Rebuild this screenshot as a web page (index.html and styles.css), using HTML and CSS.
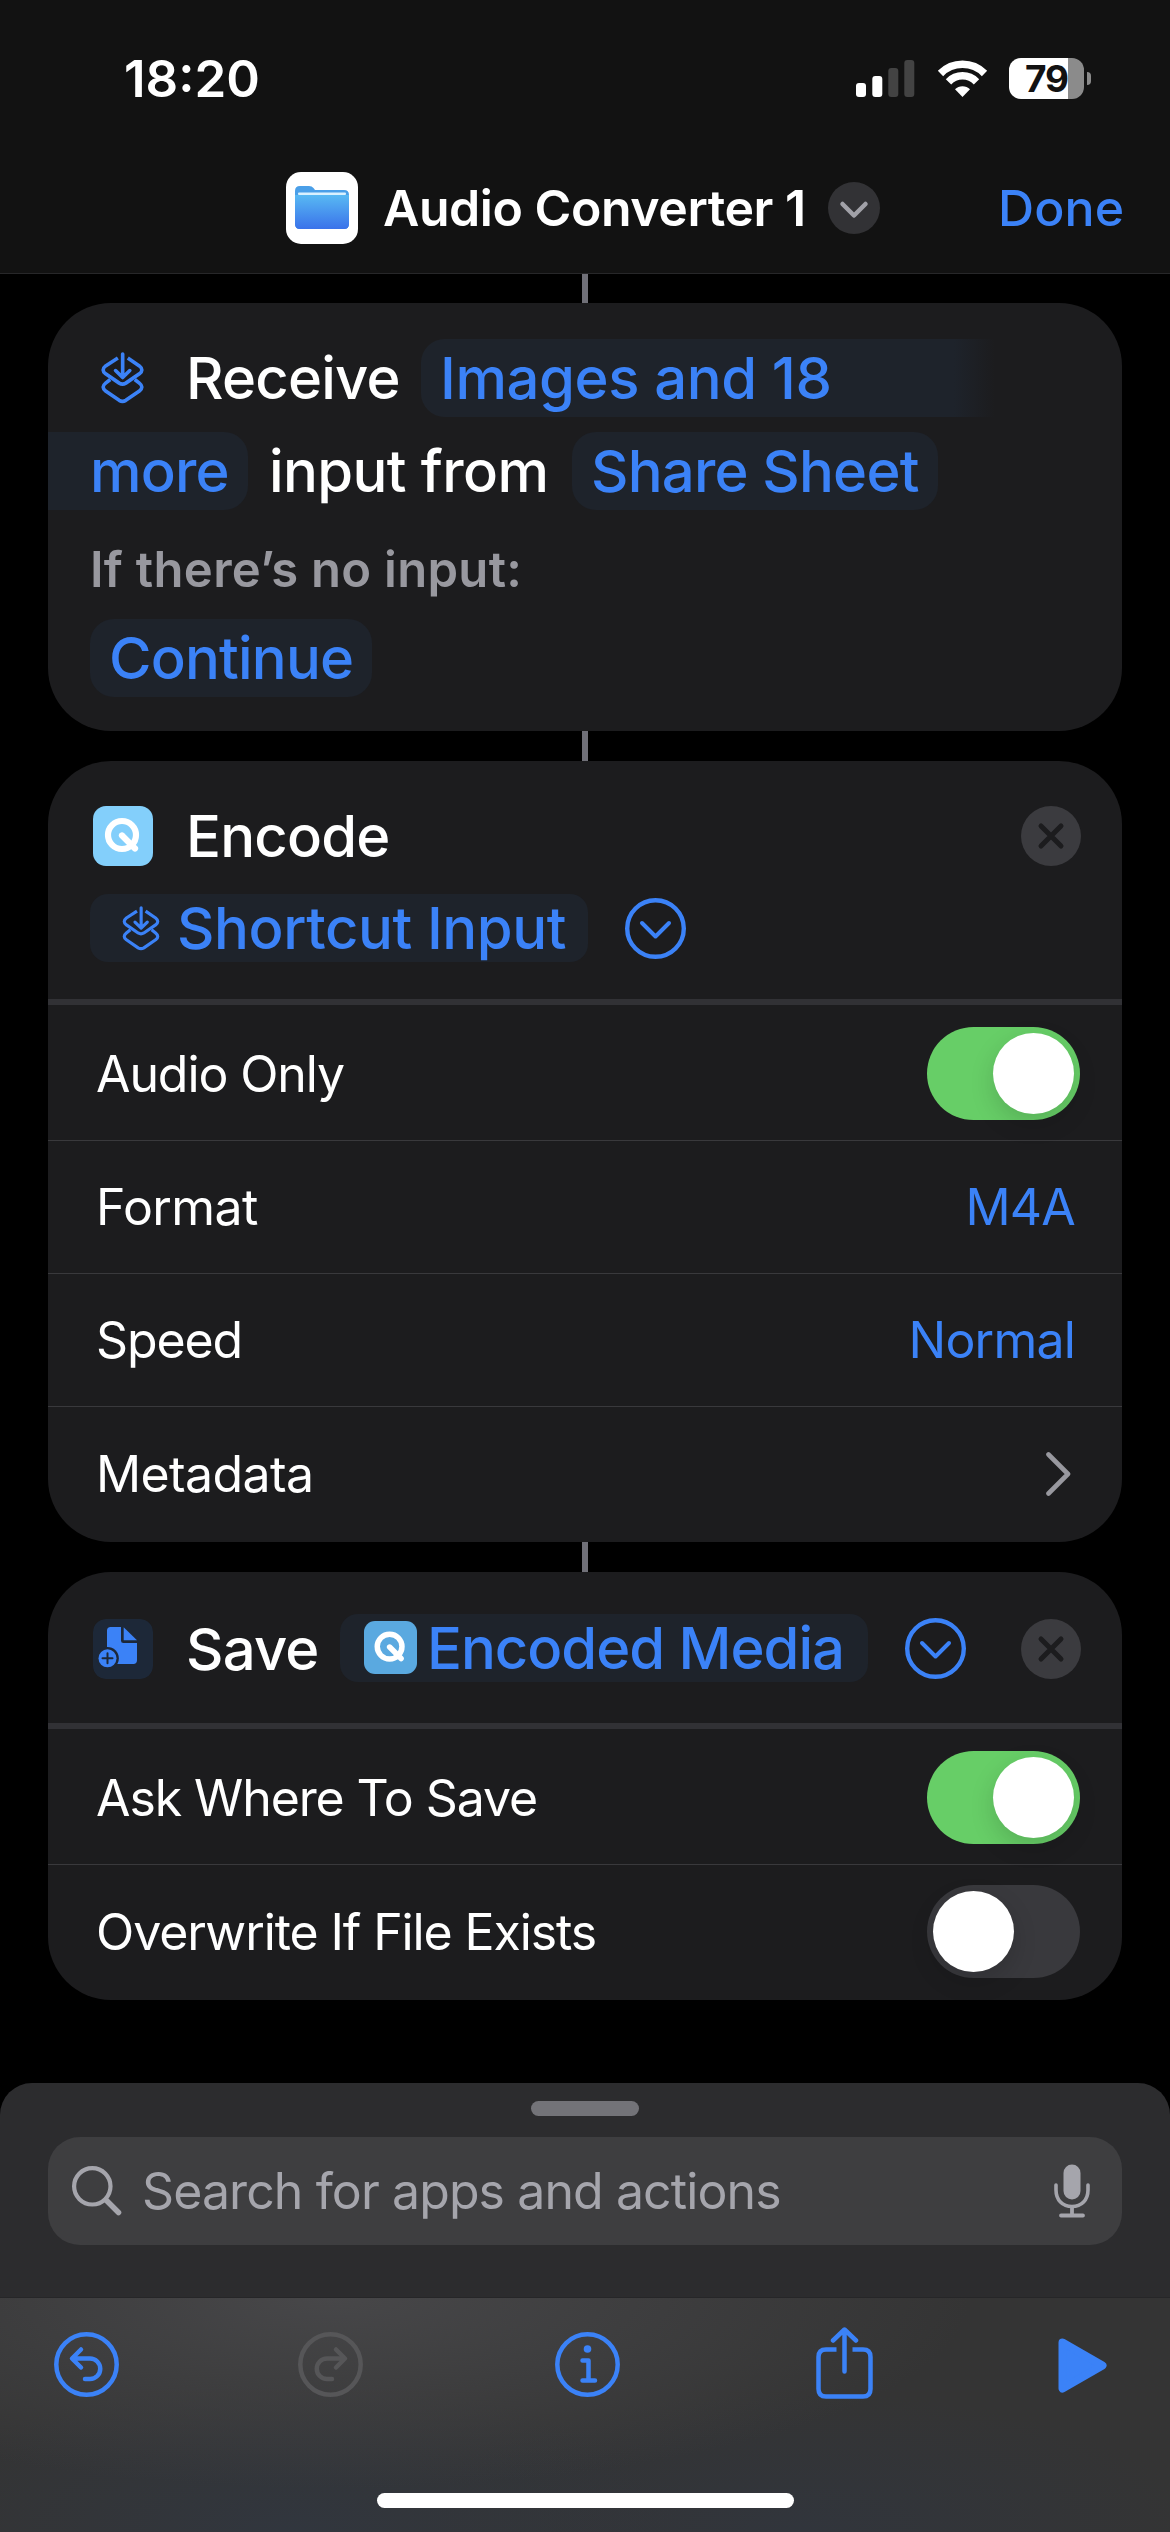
FILE: index.html
```html
<!DOCTYPE html>
<html lang="en">
<head>
<meta charset="utf-8">
<title>Audio Converter 1</title>
<link rel="stylesheet" href="styles.css">
</head>
<body>
<svg class="defs" aria-hidden="true">
  <symbol id="shortcut" viewBox="63 51 130 157">
    <g fill="none" stroke="currentColor" stroke-width="11" stroke-linecap="butt" stroke-linejoin="round">
      <path d="M114 69 L77 93 Q62 105 77 117 L118 145 Q128 151 138 145 L179 117 Q194 105 179 93 L144 69"/>
      <path d="M91 134 L77 145 Q62 157 77 169 L118 197 Q128 203 138 197 L179 169 Q194 157 179 145 L165 134"/>
      <path stroke-linecap="round" d="M128.500 57V126M107 107L128.500 128L150 107"/>
    </g>
  </symbol>
  <symbol id="q" viewBox="0 0 60 60">
    <g fill="none" stroke="#fff" stroke-width="6.200" stroke-linecap="round">
      <circle cx="29" cy="29" r="14"/>
      <path d="M29 29.500L42 42.500"/>
    </g>
  </symbol>
  <symbol id="more" viewBox="0 0 61 61">
    <g fill="none" stroke="currentColor" stroke-linecap="round" stroke-linejoin="round">
      <circle cx="30.500" cy="30.500" r="28.300" stroke-width="4.400"/>
      <path stroke-width="4" d="M17 25L30.500 38.500L44 25"/>
    </g>
  </symbol>
  <symbol id="close" viewBox="0 0 60 60">
    <circle cx="30" cy="30" r="30" fill="#3b3b3f"/>
    <path d="M20 20L40 40M40 20L20 40" fill="none" stroke="#1c1c1e" stroke-width="5" stroke-linecap="round"/>
  </symbol>
</svg>

<header class="header">
  <div class="status">
    <span class="time">18:20</span>
    <span class="status-icons">
      <svg width="59" height="37" viewBox="0 0 59 37">
        <rect x="0" y="23" width="10" height="14" rx="3" fill="#fff"/>
        <rect x="16.300" y="16" width="10" height="21" rx="3" fill="#fff"/>
        <rect x="32.300" y="8" width="10" height="29" rx="3" fill="#434343"/>
        <rect x="48.300" y="0" width="10" height="37" rx="3" fill="#434343"/>
      </svg>
      <svg class="wifi" width="51" height="37" viewBox="0 0 51 37">
        <g fill="none" stroke="#fff" stroke-width="7.500">
          <path d="M3.500 13.500A31 31 0 0 1 47.500 13.500"/>
          <path d="M11.500 21.800A19.500 19.500 0 0 1 39.500 21.800"/>
        </g>
        <path d="M25.500 37L18 29.300A10.600 10.600 0 0 1 33 29.300Z" fill="#fff"/>
      </svg>
      <span class="battery"><span class="level">79</span></span>
      <span class="nub"></span>
    </span>
  </div>
  <div class="titlebar">
    <span class="app-icon">
      <svg width="54" height="43" viewBox="0 0 54 43">
        <defs>
          <linearGradient id="folder" x1="0" y1="0" x2="0" y2="1">
            <stop offset="0" stop-color="#58b9f3"/><stop offset="1" stop-color="#3a72ea"/>
          </linearGradient>
        </defs>
        <path d="M0 5Q0 0 5 0H14Q17 0 18.500 2L20 4H49Q54 4 54 9V38Q54 43 49 43H5Q0 43 0 38Z" fill="#4a9fe8"/>
        <path d="M0 9H54V38Q54 43 49 43H5Q0 43 0 38Z" fill="url(#folder)"/>
        <rect x="3" y="6.500" width="48" height="2.500" rx="1" fill="#d9f1ff"/>
      </svg>
    </span>
    <span class="title">Audio Converter 1</span>
    <svg class="title-more" width="52" height="52" viewBox="0 0 52 52">
      <circle cx="26" cy="26" r="26" fill="#323235"/>
      <path d="M14.500 22L26 33.500L37.500 22" fill="none" stroke="#a1a1a8" stroke-width="4.500" stroke-linecap="round" stroke-linejoin="round"/>
    </svg>
    <span class="done">Done</span>
  </div>
</header>

<main class="flow">
  <div class="link"></div>
  <section class="card receive">
    <div class="line">
      <svg class="receive-icon" width="43" height="52"><use href="#shortcut"/></svg>
      <span class="big receive-word">Receive</span>
      <span class="pill fade"><span class="big loose">Images and 18</span></span>
    </div>
    <div class="line">
      <span class="pill cont"><span class="big">more</span></span>
      <span class="big input-word">input from</span>
      <span class="pill"><span class="big">Share Sheet</span></span>
    </div>
    <div class="hint"><span>If there’s no input:</span></div>
    <div class="line inset"><span class="pill"><span class="big">Continue</span></span></div>
  </section>
  <div class="link"></div>

  <section class="card encode">
    <div class="head">
      <svg class="action-icon q-icon" width="60" height="60"><use href="#q"/></svg>
      <span class="big">Encode</span>
      <svg class="close" width="60" height="60"><use href="#close"/></svg>
    </div>
    <div class="variable">
      <span class="token">
        <svg class="token-shortcut" width="38" height="45"><use href="#shortcut"/></svg>
        <span class="big loose">Shortcut Input</span>
      </span>
      <svg class="more" width="61" height="61"><use href="#more"/></svg>
    </div>
    <div class="rows">
      <div class="row"><span class="label">Audio Only</span><span class="toggle on"></span></div>
      <div class="row"><span class="label loose">Format</span><span class="value">M4A</span></div>
      <div class="row"><span class="label">Speed</span><span class="value">Normal</span></div>
      <div class="row"><span class="label loose">Metadata</span>
        <svg class="chevron" width="25" height="44" viewBox="0 0 25 44"><path d="M2.500 2.500L22 22L2.500 41.500" fill="none" stroke="#98989f" stroke-width="4.600" stroke-linecap="round" stroke-linejoin="round"/></svg>
      </div>
    </div>
  </section>
  <div class="link"></div>

  <section class="card save">
    <div class="head">
      <svg class="action-icon" width="60" height="60" viewBox="27 27 180 180">
        <rect x="27" y="27" width="180" height="180" rx="38" fill="#1d2838"/>
        <path d="M80 51H111V92Q111 99 118 99H159V151Q159 162 148 162H80Q69 162 69 151V62Q69 51 80 51Z" fill="#3b82f7"/>
        <path d="M119 52L159 91H119Z" fill="#3b82f7"/>
        <circle cx="70.500" cy="145" r="34" fill="#1d2838"/>
        <circle cx="70.500" cy="145" r="27" fill="#3b82f7"/>
        <path d="M70.500 130V160M55.500 145H85.500" stroke="#1d2838" stroke-width="6" stroke-linecap="round"/>
      </svg>
      <span class="big save-word">Save</span>
      <span class="token media">
        <svg class="token-q" width="53" height="53"><use href="#q"/></svg>
        <span class="big">Encoded Media</span>
      </span>
      <svg class="more" width="61" height="61"><use href="#more"/></svg>
      <svg class="close" width="60" height="60"><use href="#close"/></svg>
    </div>
    <div class="rows">
      <div class="row"><span class="label">Ask Where To Save</span><span class="toggle on"></span></div>
      <div class="row"><span class="label">Overwrite If File Exists</span><span class="toggle"></span></div>
    </div>
  </section>
</main>

<footer class="sheet">
  <div class="grabber"></div>
  <div class="search">
    <svg width="50" height="50" viewBox="0 0 50 50" fill="none" stroke="#a5a5ac" stroke-linecap="round">
      <circle cx="20.300" cy="20.300" r="18.200" stroke-width="4.200"/><path d="M34 34L46.500 46.500" stroke-width="5.500"/>
    </svg>
    <span class="placeholder">Search for apps and actions</span>
    <svg class="mic" width="36" height="54" viewBox="0 0 36 54" fill="none" stroke="#a5a5ac" stroke-linecap="round">
      <rect x="9.500" y="0.500" width="17" height="35" rx="8.500" fill="#a5a5ac" stroke="none"/>
      <path d="M2 21V26C2 36 8.500 42.500 18 42.500S34 36 34 26V21" stroke-width="3.600"/>
      <path d="M18 43V51M7 51.500H29" stroke-width="3.800"/>
    </svg>
  </div>
  <div class="bottom">
    <nav class="toolbar">
      <svg width="65" height="65" viewBox="0 0 65 65" fill="none" stroke="#3b82f7" stroke-width="4.500" stroke-linecap="round" stroke-linejoin="round">
        <circle cx="32.500" cy="32.500" r="30.200"/>
        <path d="M27 17.500L18 26.500L27 35.500M18.500 26.500H36A10 10 0 0 1 36 47H31"/>
      </svg>
      <svg class="redo" width="65" height="65" viewBox="0 0 65 65" fill="none" stroke="#565658" stroke-width="4.500" stroke-linecap="round" stroke-linejoin="round">
        <circle cx="32.500" cy="32.500" r="30.200"/>
        <path d="M38 17.500L47 26.500L38 35.500M46.500 26.500H29A10 10 0 0 0 29 47H34"/>
      </svg>
      <svg class="info" width="65" height="65" viewBox="0 0 65 65" fill="none" stroke="#3b82f7" stroke-width="4.500" stroke-linecap="round" stroke-linejoin="round">
        <circle cx="32.500" cy="32.500" r="30.200"/>
        <circle cx="32.500" cy="17" r="3.800" fill="#3b82f7" stroke="none"/>
        <path d="M27.500 28.500H33.500V48M27.500 48.500H40"/>
      </svg>
      <svg class="share" width="57" height="72" viewBox="0 0 57 72" fill="none" stroke="#3b82f7" stroke-width="4.500" stroke-linejoin="round">
        <path d="M20.500 22.500H10Q2.500 22.500 2.500 30V62Q2.500 69.500 10 69.500H47Q54.500 69.500 54.500 62V30Q54.500 22.500 47 22.500H36.500"/>
        <path stroke-linecap="round" d="M28.500 44.500V3M17 13.500L28.500 2.500L40 13.500"/>
      </svg>
      <svg class="play" width="49" height="55" viewBox="0 0 49 55">
        <path d="M4.500 4.500L44.500 27.500L4.500 50.500Z" fill="#3b82f7" stroke="#3b82f7" stroke-width="8" stroke-linejoin="round"/>
      </svg>
    </nav>
    <div class="home"></div>
  </div>
</footer>
</body>
</html>
```
FILE: styles.css
```css
* { box-sizing: border-box; }

body {
  margin: 0;
  width: 1170px;
  height: 2532px;
  overflow: hidden;
  display: flex;
  flex-direction: column;
  background: #000;
  color: #fff;
  font-family: Inter, "Liberation Sans", sans-serif;
  white-space: nowrap;
}

svg { display: block; flex: none; }
span { flex: none; }
.defs { position: absolute; width: 0; height: 0; }

/* Header */
.header {
  height: 274px;
  flex: none;
  background: #121212;
  border-bottom: 1px solid #272729;
}
.status {
  height: 156px;
  padding: 0 79px 0 124px;
  display: flex;
  align-items: center;
  justify-content: space-between;
}
.time { font-size: 51px; font-weight: 600; }
.status-icons { display: flex; align-items: center; }
.wifi { margin-left: 22px; }
.battery {
  width: 75px;
  height: 41px;
  margin-left: 21px;
  border-radius: 12px;
  display: flex;
  align-items: center;
  justify-content: center;
  background: linear-gradient(90deg, #fff 59px, #8b8b8b 59px);
}
.level { color: #121212; font-size: 37px; font-weight: 700; letter-spacing: -1px; }
.nub { width: 4px; height: 13px; margin-left: 3px; border-radius: 0 4px 4px 0; background: #8b8b8b; }

.titlebar {
  height: 103px;
  padding-left: 286px;
  display: flex;
  align-items: center;
}
.app-icon {
  width: 72px;
  height: 72px;
  border-radius: 15px;
  background: #fff;
  display: flex;
  align-items: center;
  justify-content: center;
}
.title { width: 445px; margin-left: 25px; font-size: 50px; font-weight: 600; letter-spacing: -0.45px; }
.title-more { margin-left: 0; }
.done { margin-left: 118px; font-size: 50px; font-weight: 500; letter-spacing: 0.1px; color: #3b82f7; }

/* Action cards */
.flow {
  height: 1809px;
  flex: none;
  display: flex;
  flex-direction: column;
  align-items: center;
}
.link { width: 6px; height: 30px; flex: none; background: #707078; }
.flow > .link:first-child { height: 29px; }
.card {
  width: 1074px;
  flex: none;
  border-radius: 63px;
  background: #1c1c1e;
  overflow: hidden;
}
.big { font-size: 58px; line-height: 68px; font-weight: 500; letter-spacing: -0.8px; }
.big.loose { letter-spacing: -0.4px; }
.receive { height: 428px; padding-top: 36px; }
.line { height: 78px; margin-bottom: 15px; display: flex; align-items: center; }
.inset { padding-left: 42px; }
.receive-icon { margin-left: 53px; color: #3b82f7; }
.receive-word { width: 235px; margin-left: 42px; }
.pill {
  height: 78px;
  padding: 0 19px;
  display: flex;
  align-items: center;
  border-radius: 24px;
  background: #1e232b;
  color: #3b82f7;
}
.fade {
  width: 578px;
  border-radius: 24px 0 0 24px;
  background: linear-gradient(90deg, #1e232b 533px, #1c1c1e 574px);
}
.cont { width: 200px; padding-left: 42px; border-radius: 0 24px 24px 0; }
.input-word { width: 303px; margin-left: 21px; letter-spacing: -0.6px; }
.hint {
  height: 60px;
  margin: 29px 0 20px;
  padding-left: 42px;
  display: flex;
  align-items: center;
  color: #98989f;
  font-size: 49px;
  font-weight: 600;
  letter-spacing: 0.3px;
}

.head { display: flex; align-items: center; padding: 0 41px 0 45px; }
.head > .big { margin-left: 33px; }
.action-icon { border-radius: 13px; }
.q-icon { background: #83cffb; }
.close { margin-left: auto; }
.encode { height: 781px; }
.encode .head { height: 150px; }
.variable {
  height: 88px;
  margin-top: -17px;
  padding-left: 42px;
  display: flex;
  align-items: flex-start;
}
.token {
  height: 68px;
  display: flex;
  align-items: center;
  border-radius: 18px;
  background: #1e232b;
  color: #3b82f7;
}
.variable .token { width: 498px; padding-left: 32px; }
.token-shortcut { margin-right: 17px; }
.more { color: #3b82f7; }
.variable .more { margin: 4px 0 0 37px; }
.rows { border-top: 6px solid #313135; }
.encode .rows { margin-top: 17px; }
.row {
  height: 133px;
  padding: 0 41px 0 48px;
  display: flex;
  align-items: center;
  justify-content: space-between;
  border-bottom: 1px solid #39393c;
}
.row:first-child { height: 136px; padding-top: 2px; }
.row:last-child { border-bottom: 0; }
.label, .value { font-size: 50px; }
.label { letter-spacing: -1.1px; }
.label.loose { letter-spacing: -0.6px; }
.value { margin-right: 6px; letter-spacing: -0.8px; color: #3b82f7; }
.chevron { margin-right: 10px; }

.toggle {
  width: 153px;
  height: 93px;
  margin-right: 1px;
  padding: 6px;
  display: flex;
  border-radius: 47px;
  background: #39393d;
}
.toggle::before {
  content: "";
  width: 81px;
  height: 81px;
  border-radius: 50%;
  background: #fff;
  box-shadow: 0 9px 24px rgba(0, 0, 0, 0.15);
}
.toggle.on { justify-content: flex-end; background: #67ce67; }

.save { height: 428px; }
.save .head { height: 151px; padding-top: 3px; }
.save-word { width: 131px; }
.media { width: 528px; margin: -3px 37px 0 23px; padding-left: 24px; }
.media .big { letter-spacing: -1px; }
.save .head .more { margin-top: -2px; }
.token-q { margin-right: 10px; border-radius: 11px; background: #5aa9e0; }

/* Search sheet and toolbar */
.sheet {
  height: 449px;
  flex: none;
  border-radius: 32px 32px 0 0;
  background: #2c2c2e;
  overflow: hidden;
}
.grabber { width: 108px; height: 15px; margin: 18px auto 21px; border-radius: 8px; background: #737378; }
.search {
  height: 108px;
  margin: 0 48px;
  padding: 0 32px 0 24px;
  display: flex;
  align-items: center;
  border-radius: 32px;
  background: #3e3e40;
  color: #a5a5ac;
}
.placeholder { margin-left: 20px; font-size: 50px; letter-spacing: -0.9px; }
.mic { margin-left: auto; }
.bottom {
  height: 235px;
  margin-top: 52px;
  border-top: 1px solid #262628;
  background:
    radial-gradient(ellipse 640px 190px at 330px 0, #474749 0, rgba(71, 71, 73, 0) 100%),
    radial-gradient(ellipse 400px 150px at 290px 234px, #31363e 0, rgba(49, 54, 62, 0) 100%),
    radial-gradient(ellipse 400px 140px at 800px 234px, #31353c 0, rgba(49, 53, 60, 0) 100%),
    #343434;
}
.toolbar {
  height: 181px;
  padding: 34px 64px 0 54px;
  display: flex;
  align-items: flex-start;
}
.redo { margin-left: 179px; }
.info { margin-left: 192px; }
.share { margin: -5px 0 0 196px; }
.play { margin: 6px 0 0 185px; }
.home { width: 417px; height: 15px; margin: 14px auto 0; border-radius: 8px; background: #fff; }
```
